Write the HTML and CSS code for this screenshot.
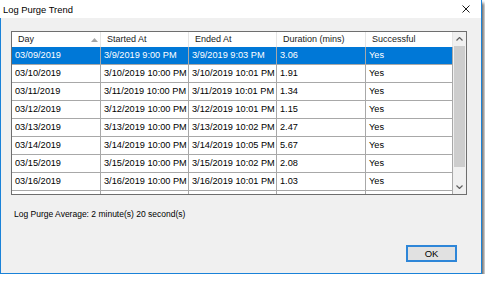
FILE: index.html
```html
<!DOCTYPE html>
<html lang="en">
<head>
  <meta charset="UTF-8">
  <title>Log Purge Trend</title>
  <link rel="stylesheet" href="styles.css">
</head>
<body>
  <div class="window">
    <div class="titlebar">
      <span class="title">Log Purge Trend</span>
      <svg class="close" width="8" height="8" viewBox="0 0 8 8">
        <path d="M0.5 0.5 L7.5 7.5 M7.5 0.5 L0.5 7.5" stroke="#1a1a1a" stroke-width="1" fill="none"/>
      </svg>
    </div>

    <div class="content">
      <div class="list">
        <div class="grid">
          <div class="head">
            <div class="hcell">Day
              <svg class="sort" width="7" height="4" viewBox="0 0 7 4"><path d="M0 4 L3.5 0 L7 4 Z" fill="#a6a6a6"/></svg>
            </div>
            <div class="hcell">Started At</div>
            <div class="hcell">Ended At</div>
            <div class="hcell">Duration (mins)</div>
            <div class="hcell">Successful</div>
          </div>
          <div id="rows"></div>
        </div>
        <div class="scroll">
          <div class="sbtn">
            <svg width="7" height="4" viewBox="0 0 7 4"><path d="M0.5 3.5 L3.5 0.5 L6.5 3.5" stroke="#606060" stroke-width="1.2" fill="none"/></svg>
          </div>
          <div class="thumb"></div>
          <div class="track"></div>
          <div class="sbtn">
            <svg width="7" height="4" viewBox="0 0 7 4"><path d="M0.5 0.5 L3.5 3.5 L6.5 0.5" stroke="#606060" stroke-width="1.2" fill="none"/></svg>
          </div>
        </div>
      </div>

      <div class="avg">Log Purge Average: 2 minute(s) 20 second(s)</div>

      <div class="footer">
        <button class="ok">OK</button>
      </div>
    </div>
  </div>

  <script>
    const runs = [
      ["03/09/2019", "3/9/2019 9:00 PM", "3/9/2019 9:03 PM", "3.06", "Yes"],
      ["03/10/2019", "3/10/2019 10:00 PM", "3/10/2019 10:01 PM", "1.91", "Yes"],
      ["03/11/2019", "3/11/2019 10:00 PM", "3/11/2019 10:01 PM", "1.34", "Yes"],
      ["03/12/2019", "3/12/2019 10:00 PM", "3/12/2019 10:01 PM", "1.15", "Yes"],
      ["03/13/2019", "3/13/2019 10:00 PM", "3/13/2019 10:02 PM", "2.47", "Yes"],
      ["03/14/2019", "3/14/2019 10:00 PM", "3/14/2019 10:05 PM", "5.67", "Yes"],
      ["03/15/2019", "3/15/2019 10:00 PM", "3/15/2019 10:02 PM", "2.08", "Yes"],
      ["03/16/2019", "3/16/2019 10:00 PM", "3/16/2019 10:01 PM", "1.03", "Yes"],
      ["", "", "", "", ""]  // row cut off by the bottom edge
    ];

    // first row is the selected one
    document.getElementById("rows").innerHTML = runs.map((r, i) =>
      `<div class="row${i === 0 ? " selected" : ""}">` +
      r.map(c => `<div class="cell">${c}</div>`).join("") +
      `</div>`
    ).join("");
  </script>
</body>
</html>
```

FILE: styles.css
```css
body {
  margin: 0;
  background: #fff;
  font-family: "Liberation Sans", Arial, sans-serif;
  color: #000;
}
.window {
  width: 481px;
  border-right: 1px solid #1a82d8;
  border-bottom: 1px solid #1a82d8;
  box-shadow: 2px 3px 3px rgba(0, 0, 0, 0.6);
}
.titlebar {
  height: 18px;
  background: #fff;
  display: flex;
  align-items: center;
  justify-content: space-between;
  padding: 0 11px 0 3px;
}
.title {
  font-size: 9.4px;
}
.close {
  display: block;
}
.content {
  background: #f0f0f0;
  border-left: 1px solid #1a82d8;
  height: 255px;
  box-sizing: border-box;
  padding: 13px 24px 11px 10px;
  display: flex;
  flex-direction: column;
}
.list {
  width: 456px;
  height: 164px;
  box-sizing: border-box;
  border: 1px solid #6e6e6e;
  background: #fff;
  display: flex;
  overflow: hidden;
}
.grid {
  width: 441px;
  overflow: hidden;
}
.head, .row {
  display: grid;
  grid-template-columns: 89px 88px 88px 89px 87px;
}
.hcell {
  height: 15px;
  line-height: 15px;
  font-size: 9px;
  color: #1a1a1a;
  padding-left: 6px;
  border-right: 1px solid #e5e5e5;
  position: relative;
}
.sort {
  position: absolute;
  right: 2px;
  top: 6px;
}
.cell {
  height: 17px;
  line-height: 17px;
  font-size: 9.2px;
  padding-left: 3px;
  border-right: 1px solid #a8a8a8;
  border-bottom: 1px solid #a8a8a8;
  white-space: nowrap;
  overflow: hidden;
}
.row.selected .cell {
  background: #0078d7;
  color: #fff;
}
.scroll {
  width: 13px;
  background: #f0f0f0;
  display: flex;
  flex-direction: column;
}
.sbtn {
  height: 14px;
  display: flex;
  align-items: center;
  justify-content: center;
}
.thumb {
  height: 121px;
  margin: 0 1px;
  background: #cdcdcd;
}
.track {
  height: 13px;
}
.avg {
  font-size: 8.5px;
  margin: 14px 0 0 3px;
}
.footer {
  margin-top: auto;
  display: flex;
  justify-content: flex-end;
}
.ok {
  width: 51px;
  height: 17px;
  padding: 0;
  background: #e1e1e1;
  border: 2px solid #2e86d8;
  font-family: "Liberation Sans", Arial, sans-serif;
  font-size: 9.5px;
  color: #000;
}
```
